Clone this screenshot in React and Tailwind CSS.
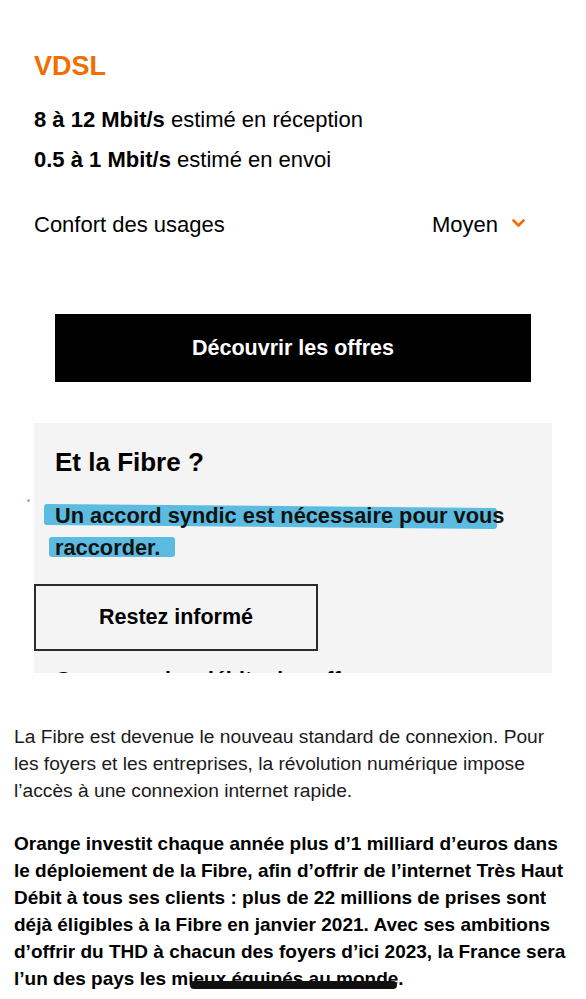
import React from "react";

function Chevron() {
  return (
    <svg width="13" height="9" viewBox="0 0 13 9" className="mt-[-4px]">
      <path d="M1.5 1.5 L6.5 6.5 L11.5 1.5" fill="none" stroke="#f16e00" strokeWidth="2.6" strokeLinecap="round" strokeLinejoin="round" />
    </svg>
  );
}

export default function App() {
  return (
    <div className="relative w-[586px] h-[999px] overflow-hidden bg-white text-black font-['Liberation_Sans',Arial,sans-serif]">
      {/* VDSL summary */}
      <div className="px-[34px] pt-[50px]">
        <h2 className="text-[27px] leading-[32px] font-bold text-[#f16e00]">VDSL</h2>
        <div className="mt-[18px] text-[22px] leading-[40px]">
          <p>
            <span className="font-bold">8 à 12 Mbit/s</span> estimé en réception
          </p>
          <p>
            <span className="font-bold">0.5 à 1 Mbit/s</span> estimé en envoi
          </p>
        </div>
        <div className="mt-[25px] flex items-center justify-between text-[22px] leading-[40px] pr-[27px]">
          <span>Confort des usages</span>
          <span className="flex items-center gap-[14px]">
            Moyen
            <Chevron />
          </span>
        </div>
      </div>

      <div className="px-[55px] mt-[69px]">
        <button className="w-full h-[68px] bg-black text-white text-[21.5px] font-bold">
          Découvrir les offres
        </button>
      </div>

      {/* Fibre box */}
      <div className="mx-[34px] mt-[41px] h-[250px] overflow-hidden bg-[#f4f4f4]">
        <h3 className="pt-[23px] px-[21px] text-[26px] leading-[32px] font-bold">Et la Fibre ?</h3>
        <div className="relative mt-[22px] ml-[21px] mr-[21px]">
          <span className="absolute left-[-11px] top-[6px] w-[453px] h-[21px] rounded-[3px] bg-[#5bbbe0] rotate-[0.5deg]" />
          <span className="absolute left-[-6px] top-[37px] w-[126px] h-[20px] rounded-[3px] bg-[#5bbbe0]" />
          <p className="relative text-[21.8px] leading-[32px] font-bold text-[#111]">
            <span className="whitespace-nowrap">Un accord syndic est nécessaire pour vous</span>
            <br />
            raccorder.
          </p>
        </div>
        <button className="mt-[20px] w-[284px] h-[67px] border-2 border-[#2b2b2b] text-[21.5px] font-bold">
          Restez informé
        </button>
        <p className="mt-[13px] px-[21px] text-[21.5px] leading-[32px] font-bold whitespace-nowrap">
          Comparez les débits des offres
        </p>
      </div>

      {/* Texte */}
      <div className="px-[14px] mt-[50px] text-[19.2px] leading-[27px] text-[#1a1a1a] whitespace-nowrap">
        <p>
          La Fibre est devenue le nouveau standard de connexion. Pour
          <br />
          les foyers et les entreprises, la révolution numérique impose
          <br />
          l’accès à une connexion internet rapide.
        </p>
        <p className="mt-[26px] text-[19px] font-bold text-black">
          Orange investit chaque année plus d’1 milliard d’euros dans
          <br />
          le déploiement de la Fibre, afin d’offrir de l’internet Très Haut
          <br />
          Débit à tous ses clients : plus de 22 millions de prises sont
          <br />
          déjà éligibles à la Fibre en janvier 2021. Avec ses ambitions
          <br />
          d’offrir du THD à chacun des foyers d’ici 2023, la France sera
          <br />
          l’un des pays les mieux équipés au monde.
        </p>
      </div>

      {/* repère et barre d'accueil */}
      <span className="absolute left-[27px] top-[499px] w-[3px] h-[3px] rounded-full bg-[#8bbcc4]" />
      <span className="absolute left-[190px] top-[981px] w-[207px] h-[8px] rounded-full bg-[#111]" />
    </div>
  );
}
